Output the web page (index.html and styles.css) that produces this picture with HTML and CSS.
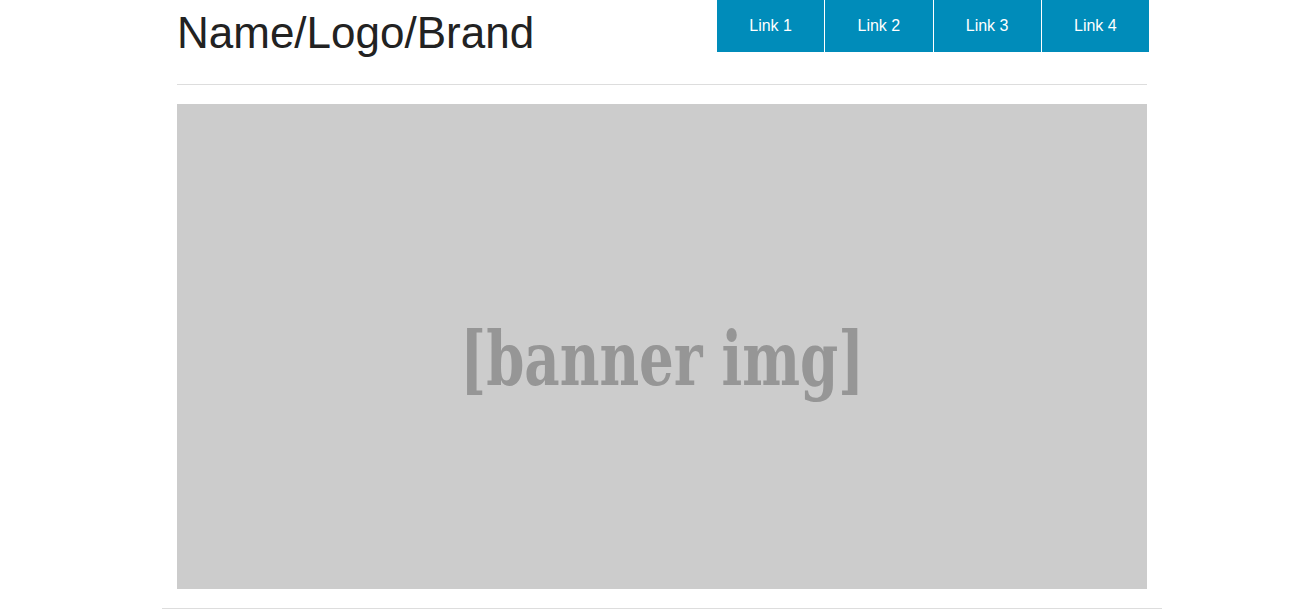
FILE: index.html
```html
<!DOCTYPE html>
<html lang="en">
<head>
<meta charset="utf-8">
<title>Name/Logo/Brand</title>
<link rel="stylesheet" href="styles.css">
</head>
<body>
<div class="page">
  <div class="container">
    <header class="header">
      <h1 class="brand">Name/Logo/Brand</h1>
      <nav class="nav">
        <a class="nav-link" href="#">Link 1</a>
        <a class="nav-link" href="#">Link 2</a>
        <a class="nav-link" href="#">Link 3</a>
        <a class="nav-link" href="#">Link 4</a>
      </nav>
    </header>
    <hr class="rule">
    <div class="banner"><span class="banner-text">[banner img]</span></div>
  </div>
  <hr class="footer-rule">
</div>
</body>
</html>
```

FILE: styles.css
```css
html, body {
  margin: 0;
  padding: 0;
  background: #fff;
}

body {
  font-family: "Liberation Sans", Arial, Helvetica, sans-serif;
  color: #222;
}

.page {
  width: 1000px;
  margin-left: 162px;
}

.container {
  margin: 0 15px;
}

.header {
  display: flex;
  justify-content: space-between;
  align-items: flex-start;
  height: 64px;
}

.brand {
  margin: 2px 0 0 0;
  font-size: 44px;
  font-weight: normal;
  line-height: 1.4;
  color: #222;
}

.nav {
  display: flex;
  gap: 1px;
  width: 432px;
  margin-right: -2px;
}

.nav-link {
  display: block;
  flex: 1;
  height: 52px;
  line-height: 52px;
  text-align: center;
  background: #008cba;
  color: #fff;
  font-size: 16px;
  text-decoration: none;
}

.rule {
  margin: 20px 0 19px 0;
  border: 0;
  border-top: 1px solid #ddd;
  height: 0;
}

.banner {
  height: 485px;
  background: #ccc;
  display: flex;
  align-items: center;
  justify-content: center;
  padding-top: 24px;
  box-sizing: border-box;
}

.banner-text {
  font-family: "DejaVu Serif", serif;
  font-stretch: condensed;
  font-weight: bold;
  font-size: 74px;
  color: #969696;
  white-space: nowrap;
  transform: scaleX(0.82);
}

.footer-rule {
  margin: 19px 0 0 0;
  border: 0;
  border-top: 1px solid #ddd;
  height: 0;
}
```
